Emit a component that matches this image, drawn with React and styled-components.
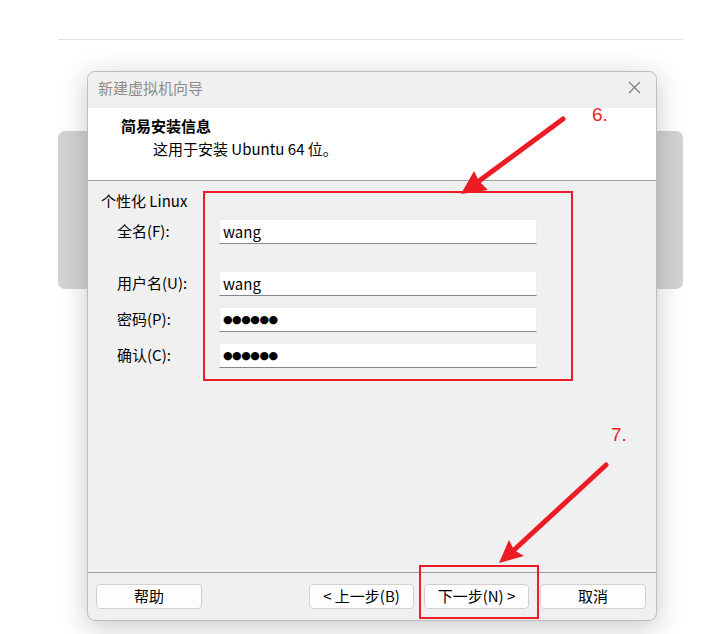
import React from 'react';
import styled, { createGlobalStyle } from 'styled-components';

const GlobalStyle = createGlobalStyle`
  html, body {
    margin: 0;
    padding: 0;
    background: #ffffff;
  }
  body {
    font-family: "Noto Sans CJK SC", "Noto Sans", sans-serif;
  }
`;

const Page = styled.div`
  position: relative;
  width: 723px;
  height: 634px;
  overflow: hidden;
  background: #ffffff;
  padding: 39px 0 0 58px;
  box-sizing: border-box;
`;

const TopRule = styled.div`
  width: 625px;
  height: 1px;
  background: #e2e2e2;
`;

const BackCard = styled.div`
  width: 625px;
  height: 158px;
  margin-top: 91px;
  border-radius: 7px;
  background: #d3d3d3;
`;

const Dialog = styled.div`
  position: absolute;
  left: 87px;
  top: 71px;
  width: 570px;
  height: 550px;
  box-sizing: border-box;
  border: 1px solid #bdbdbd;
  border-radius: 8px;
  overflow: hidden;
  background: #f0f0f0;
  box-shadow: 0 6px 28px rgba(0, 0, 0, 0.22);
  display: flex;
  flex-direction: column;
  font-size: 15px;
  color: #000;
`;

const TitleBar = styled.div`
  flex: none;
  height: 36px;
  display: flex;
  align-items: center;
  justify-content: space-between;
  padding: 0 15px 5px 10px;
  box-sizing: border-box;
  background: #f0f0f0;
  color: #8c8c8c;
`;

const CloseIcon = () => (
  <svg width="13" height="13" viewBox="0 0 13 13">
    <path d="M1 1L12 12M12 1L1 12" stroke="#7a7a7a" strokeWidth="1.1" />
  </svg>
);

const Header = styled.div`
  flex: none;
  height: 73px;
  box-sizing: border-box;
  background: #ffffff;
  border-bottom: 1px solid #a0a0a0;
  padding: 8px 0 0 33px;
`;

const HeaderTitle = styled.div`
  font-weight: 700;
  line-height: 20px;
`;

const HeaderText = styled.div`
  margin: 3px 0 0 32px;
  line-height: 20px;
`;

const Body = styled.div`
  flex: 1;
  padding: 10px 0 0 13px;
`;

const GroupTitle = styled.div`
  line-height: 20px;
`;

const Row = styled.div`
  display: flex;
  align-items: center;
  height: 25px;
  margin: ${({ $gap }) => $gap}px 0 0 16px;
`;

const Label = styled.label`
  width: 102px;
  line-height: 20px;
  margin-top: -2px;
`;

const Field = styled.input`
  width: 318px;
  height: 25px;
  box-sizing: border-box;
  border: 1px solid #ececec;
  border-bottom: 1px solid #858585;
  background: #ffffff;
  padding: 0 0 1px 3px;
  font-family: ${({ $mask }) => ($mask ? '"DejaVu Sans", sans-serif' : '"Noto Sans CJK SC", "Noto Sans", sans-serif')};
  font-size: ${({ $mask }) => ($mask ? '11px' : '15px')};
  letter-spacing: ${({ $mask }) => ($mask ? '-0.5px' : '0')};
  color: #000;
  outline: none;
`;

const Footer = styled.div`
  flex: none;
  height: 48px;
  box-sizing: border-box;
  border-top: 1px solid #a0a0a0;
  display: flex;
  align-items: flex-start;
  padding: 11px 10px 0 8px;
`;

const Button = styled.button`
  width: ${({ $wide }) => ($wide ? 106 : 105)}px;
  height: 25px;
  box-sizing: border-box;
  margin-left: ${({ $gap }) => $gap || 0}px;
  border: 1px solid #d0d0d0;
  border-radius: 4px;
  background: #fdfdfd;
  font-family: "Noto Sans CJK SC", "Noto Sans", sans-serif;
  font-size: 15px;
  color: #000;
  padding: 0 0 2px;
`;

const Spacer = styled.div`
  flex: 1;
`;

const Highlight = styled.div`
  position: absolute;
  left: ${({ $x }) => $x}px;
  top: ${({ $y }) => $y}px;
  width: ${({ $w }) => $w}px;
  height: ${({ $h }) => $h}px;
  box-sizing: border-box;
  border: 2px solid #ec1c24;
`;

const StepMark = styled.span`
  position: absolute;
  left: ${({ $x }) => $x}px;
  top: ${({ $y }) => $y}px;
  font-family: "Liberation Sans", Arial, sans-serif;
  font-size: 19px;
  line-height: 20px;
  color: #ec1c24;
`;

const Arrows = styled.svg`
  position: absolute;
  left: 0;
  top: 0;
  pointer-events: none;
`;

const Arrow = ({ from, notch, head }) => (
  <g>
    <line
      x1={from[0]}
      y1={from[1]}
      x2={notch[0]}
      y2={notch[1]}
      stroke="#ec1c24"
      strokeWidth="5"
      strokeLinecap="round"
    />
    <polygon points={head.map(p => p.join(',')).join(' ')} fill="#ec1c24" />
  </g>
);

const App = () => (
  <>
    <GlobalStyle />
    <Page>
      <TopRule />
      <BackCard />

      <Dialog>
        <TitleBar>
          <span>新建虚拟机向导</span>
          <CloseIcon />
        </TitleBar>
        <Header>
          <HeaderTitle>简易安装信息</HeaderTitle>
          <HeaderText>这用于安装 Ubuntu 64 位。</HeaderText>
        </Header>
        <Body>
          <GroupTitle>个性化 Linux</GroupTitle>
          <Row $gap={8}>
            <Label>全名(F):</Label>
            <Field readOnly value="wang" />
          </Row>
          <Row $gap={27}>
            <Label>用户名(U):</Label>
            <Field readOnly value="wang" />
          </Row>
          <Row $gap={11}>
            <Label>密码(P):</Label>
            <Field readOnly $mask value="●●●●●●" />
          </Row>
          <Row $gap={11}>
            <Label>确认(C):</Label>
            <Field readOnly $mask value="●●●●●●" />
          </Row>
        </Body>
        <Footer>
          <Button $wide>帮助</Button>
          <Spacer />
          <Button>&lt; 上一步(B)</Button>
          <Button $gap={10}>下一步(N) &gt;</Button>
          <Button $gap={11} $wide>取消</Button>
        </Footer>
      </Dialog>

      <Highlight $x={203} $y={191} $w={370} $h={190} />
      <Highlight $x={419} $y={565} $w={120} $h={54} />
      <StepMark $x={592} $y={105}>6.</StepMark>
      <StepMark $x={611} $y={425}>7.</StepMark>

      <Arrows width="723" height="634" viewBox="0 0 723 634">
        <Arrow
          from={[563, 119]}
          notch={[479, 181]}
          head={[[461, 194], [474, 171], [479, 181], [488, 190]]}
        />
        <Arrow
          from={[606, 465]}
          notch={[514, 550]}
          head={[[499, 563], [509, 540], [514, 550], [524, 556]]}
        />
      </Arrows>
    </Page>
  </>
);

export default App;
